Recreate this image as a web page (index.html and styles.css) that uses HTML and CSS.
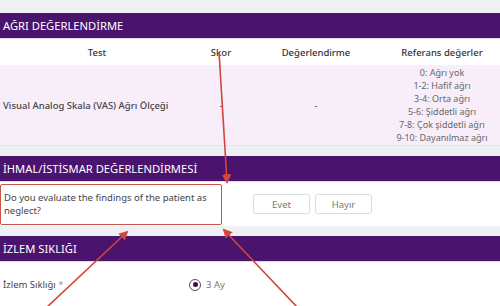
FILE: index.html
```html
<!DOCTYPE html>
<html lang="tr">
<head>
<meta charset="UTF-8">
<meta name="viewport" content="width=device-width, initial-scale=1.0">
<title>Değerlendirme</title>
<link rel="stylesheet" href="styles.css">
</head>
<body>
    <div class="page">
        <div class="panel">
            <div class="panel-head">AĞRI DEĞERLENDİRME</div>
            <div class="score-table">
                <div class="row head-row">
                    <div class="cell">Test</div>
                    <div class="cell">Skor</div>
                    <div class="cell">Değerlendirme</div>
                    <div class="cell">Referans değerler</div>
                </div>
                <div class="row body-row">
                    <div class="cell left">Visual Analog Skala (VAS) Ağrı Ölçeği</div>
                    <div class="cell">-</div>
                    <div class="cell">-</div>
                    <div class="cell refs">
                        <span>0: Ağrı yok</span>
                        <span>1-2: Hafif ağrı</span>
                        <span>3-4: Orta ağrı</span>
                        <span>5-6: Şiddetli ağrı</span>
                        <span>7-8: Çok şiddetli ağrı</span>
                        <span>9-10: Dayanılmaz ağrı</span>
                    </div>
                </div>
            </div>
        </div>

        <div class="panel">
            <div class="panel-head">İHMAL/İSTİSMAR DEĞERLENDİRMESİ</div>
            <div class="question-row">
                <div class="question">Do you evaluate the findings of the patient as neglect?</div>
                <div class="answers">
                    <button class="answer">Evet</button>
                    <button class="answer">Hayır</button>
                </div>
            </div>
        </div>

        <div class="panel">
            <div class="panel-head">İZLEM SIKLIĞI</div>
            <div class="field-row">
                <div class="field-label">İzlem Sıklığı <span class="req">*</span></div>
                <label class="radio"><span class="dot"></span>3 Ay</label>
            </div>
        </div>
    </div>

    <!-- annotation arrows -->
    <svg class="marks" width="500" height="306" viewBox="0 0 500 306">
        <defs>
            <marker id="tip" viewBox="0 0 10 10" refX="8" refY="5" markerWidth="6" markerHeight="6" orient="auto">
                <path d="M0 0 L10 5 L0 10 z" fill="#d2453a"/>
            </marker>
        </defs>
        <line x1="219" y1="52" x2="227" y2="182" stroke="#d2453a" stroke-width="1.6" marker-end="url(#tip)"/>
        <line x1="46" y1="308" x2="127" y2="232" stroke="#d2453a" stroke-width="1.6" marker-end="url(#tip)"/>
        <line x1="298" y1="308" x2="224" y2="230" stroke="#d2453a" stroke-width="1.6" marker-end="url(#tip)"/>
    </svg>
</body>
</html>
```

FILE: styles.css
```css
body {
    margin: 0;
    background: #eef0f3;
    font-family: "Noto Sans", sans-serif;
    color: #444;
    position: relative;
    width: 500px;
    height: 306px;
    overflow: hidden;
}

.page {
    padding-top: 13px;
    display: flex;
    flex-direction: column;
    gap: 10px;
}

.panel {
    background: #fff;
}

.panel-head {
    background: #4a136e;
    color: #fff;
    height: 26px;
    line-height: 26px;
    padding-left: 3px;
    font-size: 11.2px;
    border-bottom: 1px solid #e6d6ee;
    box-sizing: border-box;
}

.row {
    display: grid;
    grid-template-columns: 194px 54px 136px 116px;
    align-items: center;
}

.cell {
    text-align: center;
    font-size: 9.5px;
}

.head-row {
    height: 26px;
    font-weight: 500;
    color: #333;
}

.body-row {
    background: #f8eefa;
    height: 80px;
    border-bottom: 1px solid #e5e7ea;
}

.cell.left {
    text-align: left;
    padding-left: 3px;
    font-weight: 500;
}

.refs {
    display: flex;
    flex-direction: column;
    line-height: 13px;
    font-size: 9px;
    color: #666;
}

.question-row {
    display: flex;
    align-items: center;
    height: 44px;
}

.question {
    width: 222px;
    height: 41px;
    border: 1px solid #c8544a;
    border-radius: 2px;
    font-size: 9.5px;
    line-height: 13px;
    padding: 6px 3px;
    box-sizing: border-box;
    color: #444;
}

.answers {
    display: flex;
    gap: 5px;
    margin-left: 31px;
}

.answer {
    width: 57px;
    height: 20px;
    background: #fff;
    border: 1px solid #dcdcdc;
    border-radius: 3px;
    font-family: inherit;
    font-size: 9.5px;
    color: #777;
}

.field-row {
    display: flex;
    align-items: center;
    height: 45px;
}

.field-label {
    width: 186px;
    padding-left: 3px;
    font-size: 9.5px;
}

.req {
    color: #999;
}

.radio {
    display: flex;
    align-items: center;
    gap: 5px;
    font-size: 9.5px;
    color: #777;
}

.dot {
    width: 10px;
    height: 10px;
    border: 1.5px solid #555;
    border-radius: 50%;
    display: flex;
    align-items: center;
    justify-content: center;
}

.dot::after {
    content: "";
    width: 5px;
    height: 5px;
    border-radius: 50%;
    background: #3a1050;
}

.marks {
    position: absolute;
    top: 0;
    left: 0;
    pointer-events: none;
}
```
